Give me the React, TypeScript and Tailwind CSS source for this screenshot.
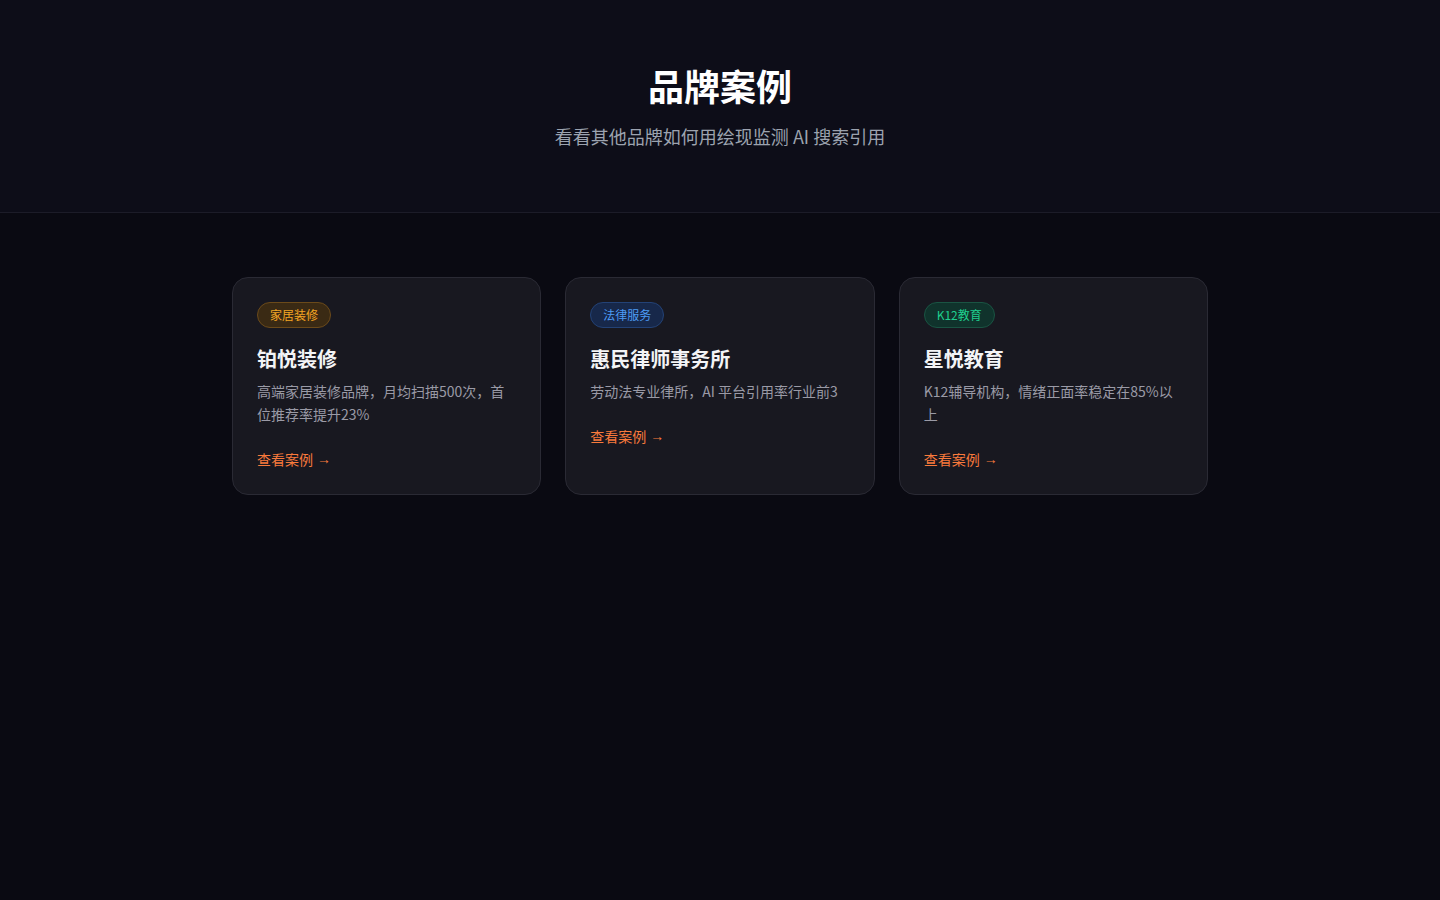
type CaseItem = {
    tag: string;
    tagClass: string;
    title: string;
    desc: string;
};

const cases: CaseItem[] = [
    {
        tag: '家居装修',
        tagClass: 'bg-[#3a2a14] text-[#f5a623] border-[#6b4a1a]',
        title: '铂悦装修',
        desc: '高端家居装修品牌，月均扫描500次，首位推荐率提升23%',
    },
    {
        tag: '法律服务',
        tagClass: 'bg-[#17284a] text-[#4d9cf5] border-[#234276]',
        title: '惠民律师事务所',
        desc: '劳动法专业律所，AI 平台引用率行业前3',
    },
    {
        tag: 'K12教育',
        tagClass: 'bg-[#10332c] text-[#1fcf8f] border-[#1a5443]',
        title: '星悦教育',
        desc: 'K12辅导机构，情绪正面率稳定在85%以上',
    },
];

const CaseCard: React.FC<{ item: CaseItem }> = ({ item }) => (
    <div className="bg-[#181820] border border-[#2a2a34] rounded-2xl px-6 pt-6 pb-[25px]">
        <span
            className={`block w-fit px-3 py-1 text-xs leading-4 rounded-full border ${item.tagClass}`}
        >
            {item.tag}
        </span>
        <h3 className="mt-[17px] text-xl leading-7 font-bold text-[#f3f4f6]">{item.title}</h3>
        <p className="mt-[7px] text-sm leading-[23px] text-[#9a9aa6]">{item.desc}</p>
        <a href="#" className="mt-[23px] flex w-fit items-center gap-1 text-sm leading-5 text-[#f97a3c]">
            查看案例
            <span className="font-['Liberation_Sans',sans-serif] text-sm font-bold">→</span>
        </a>
    </div>
);

export default function App() {
    return (
        <div
            className="min-h-screen bg-[#0a0a12]"
            style={{ fontFamily: '"Noto Sans CJK SC", "Noto Sans", sans-serif' }}
        >
            <header className="bg-[#0d0d18] border-b border-[#1c1c28] pt-[65px] pb-[62px] text-center">
                <h1 className="text-4xl leading-10 font-bold text-white">品牌案例</h1>
                <p className="mt-[17px] text-lg leading-7 text-[#9ca3af]">
                    看看其他品牌如何用绘现监测 AI 搜索引用
                </p>
            </header>
            <section className="max-w-5xl mx-auto px-6 py-16">
                <div className="grid grid-cols-3 gap-6">
                    {cases.map(c => (
                        <CaseCard key={c.title} item={c} />
                    ))}
                </div>
            </section>
        </div>
    );
}
